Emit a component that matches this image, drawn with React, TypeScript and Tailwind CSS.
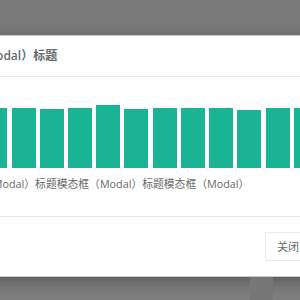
const BARS = [60, 60, 59, 60, 63.5, 59, 60, 60, 60, 58.5, 60, 60];

export default function App() {
  return (
    <div className="w-[300px] h-[300px] overflow-hidden bg-[#7f7f7f] flex flex-col font-['Open_Sans','Noto_Sans_CJK_SC',sans-serif] text-[#676a6c]">
      {/* backdrop above the dialog */}
      <div className="h-[35px] shrink-0 bg-[#787878]" />

      {/* dialog */}
      <div className="ml-[-100px] w-[430px] shrink-0 bg-white border-y border-[rgba(0,0,0,0.2)] shadow-[0_5px_15px_rgba(0,0,0,0.3)]">
        <div className="h-[41px] box-border border-b border-[#e5e5e5] pl-[35px] flex items-center">
          <h4 className="ml-[2px] text-[12px] font-semibold leading-none whitespace-nowrap">
            模态框（Modal）标题
          </h4>
        </div>

        <div className="h-[139px] pl-[35px] pt-[27.5px]">
          <div className="ml-[48.4px] h-[63.5px] flex items-end gap-[4.23px]">
            {BARS.map((h, i) => (
              <div
                key={i}
                className="w-[24px] shrink-0 bg-[#1ab394]"
                style={{ height: h }}
              />
            ))}
          </div>
          <p className="mt-[9px] ml-[-7px] text-[10.8px] leading-[14px] whitespace-nowrap">
            标题模态框（Modal）标题模态框（Modal）标题模态框（Modal）
          </p>
        </div>

        <div className="h-[60px] box-border border-t border-[#e5e5e5] pr-[19px] flex items-center justify-end">
          <button className="h-[29px] px-[11px] rounded-[3px] border border-[#e7eaec] bg-white text-[11px] leading-none whitespace-nowrap">
            关闭
          </button>
        </div>
      </div>

      {/* page behind the backdrop */}
      <div className="flex-1 flex">
        <div className="w-[250px] mt-[8px] border-t border-[#717171]" />
        <div className="w-[23px] bg-[#777777]" />
        <div className="flex-1 mt-[8px] border-t border-[#717171]" />
      </div>
    </div>
  );
}
